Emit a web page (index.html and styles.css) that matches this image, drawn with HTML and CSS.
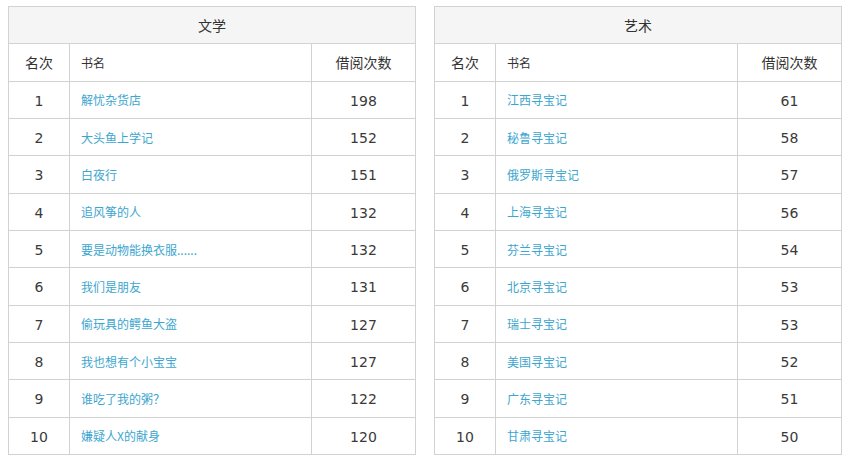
FILE: index.html
```html
<!DOCTYPE html>
<html lang="zh-CN">
<head>
<meta charset="utf-8">
<title>借阅排行</title>
<link rel="stylesheet" href="styles.css">
</head>
<body>
<div class="boards">
  <table class="rank">
    <colgroup><col class="c-rank"><col class="c-title"><col class="c-count"></colgroup>
    <thead>
      <tr><th colspan="3" class="cat">文学</th></tr>
      <tr><th>名次</th><th class="left small">书名</th><th>借阅次数</th></tr>
    </thead>
    <tbody>
      <tr><td class="num">1</td><td class="book"><a href="#">解忧杂货店</a></td><td class="num">198</td></tr>
      <tr><td class="num">2</td><td class="book"><a href="#">大头鱼上学记</a></td><td class="num">152</td></tr>
      <tr><td class="num">3</td><td class="book"><a href="#">白夜行</a></td><td class="num">151</td></tr>
      <tr><td class="num">4</td><td class="book"><a href="#">追风筝的人</a></td><td class="num">132</td></tr>
      <tr><td class="num">5</td><td class="book"><a href="#">要是动物能换衣服......</a></td><td class="num">132</td></tr>
      <tr><td class="num">6</td><td class="book"><a href="#">我们是朋友</a></td><td class="num">131</td></tr>
      <tr><td class="num">7</td><td class="book"><a href="#">偷玩具的鳄鱼大盗</a></td><td class="num">127</td></tr>
      <tr><td class="num">8</td><td class="book"><a href="#">我也想有个小宝宝</a></td><td class="num">127</td></tr>
      <tr><td class="num">9</td><td class="book"><a href="#">谁吃了我的粥？</a></td><td class="num">122</td></tr>
      <tr><td class="num">10</td><td class="book"><a href="#">嫌疑人X的献身</a></td><td class="num">120</td></tr>
    </tbody>
  </table>
  <table class="rank">
    <colgroup><col class="c-rank"><col class="c-title"><col class="c-count"></colgroup>
    <thead>
      <tr><th colspan="3" class="cat">艺术</th></tr>
      <tr><th>名次</th><th class="left small">书名</th><th>借阅次数</th></tr>
    </thead>
    <tbody>
      <tr><td class="num">1</td><td class="book"><a href="#">江西寻宝记</a></td><td class="num">61</td></tr>
      <tr><td class="num">2</td><td class="book"><a href="#">秘鲁寻宝记</a></td><td class="num">58</td></tr>
      <tr><td class="num">3</td><td class="book"><a href="#">俄罗斯寻宝记</a></td><td class="num">57</td></tr>
      <tr><td class="num">4</td><td class="book"><a href="#">上海寻宝记</a></td><td class="num">56</td></tr>
      <tr><td class="num">5</td><td class="book"><a href="#">芬兰寻宝记</a></td><td class="num">54</td></tr>
      <tr><td class="num">6</td><td class="book"><a href="#">北京寻宝记</a></td><td class="num">53</td></tr>
      <tr><td class="num">7</td><td class="book"><a href="#">瑞士寻宝记</a></td><td class="num">53</td></tr>
      <tr><td class="num">8</td><td class="book"><a href="#">美国寻宝记</a></td><td class="num">52</td></tr>
      <tr><td class="num">9</td><td class="book"><a href="#">广东寻宝记</a></td><td class="num">51</td></tr>
      <tr><td class="num">10</td><td class="book"><a href="#">甘肃寻宝记</a></td><td class="num">50</td></tr>
    </tbody>
  </table>
</div>
</body>
</html>
```
FILE: styles.css
```css
html, body {
  margin: 0;
  padding: 0;
  background: #fff;
}
body {
  font-family: "Microsoft YaHei", "Noto Sans CJK SC", "DejaVu Sans", sans-serif;
  color: #333;
}
.boards {
  display: flex;
  gap: 18px;
  padding: 6px 8px 0 8px;
}
.rank {
  width: 409px;
  border-collapse: collapse;
  table-layout: fixed;
  font-size: 14px;
}
.c-rank { width: 61px; }
.c-count { width: 104px; }
.rank th,
.rank td {
  border: 1px solid #d2d2d2;
  height: 37.33px;
  padding: 0;
  text-align: center;
  font-weight: normal;
  box-sizing: border-box;
}
.rank th.cat {
  background: #f5f5f5;
}
.rank th.left {
  text-align: left;
  padding-left: 11px;
}
.rank .small {
  font-size: 12px;
}
.rank td.num {
  font-family: "DejaVu Sans", "Noto Sans CJK SC", sans-serif;
  font-size: 14px;
  color: #3a3a3a;
  padding-top: 2px;
}
.rank td.book {
  text-align: left;
  padding-left: 11px;
  font-size: 12px;
}
.rank td.book a {
  color: #3ca6cf;
  text-decoration: none;
}
```
